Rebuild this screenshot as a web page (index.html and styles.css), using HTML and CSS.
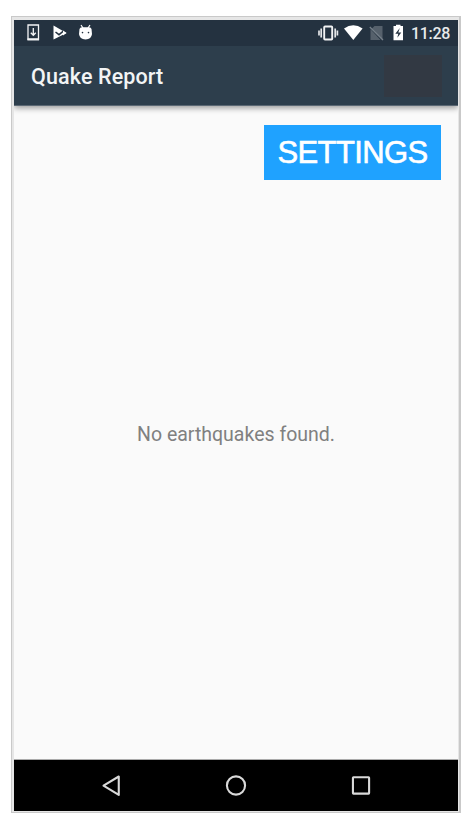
FILE: index.html
```html
<!DOCTYPE html>
<html lang="en">
<head>
<meta charset="utf-8">
<title>Quake Report</title>
<link rel="stylesheet" href="styles.css">
</head>
<body>
<main class="phone">
  <header class="status">
    <svg class="status-left" width="80" height="26" viewBox="0 0 80 26">
      <path d="M14 5h10.500v14.500H14z" fill="none" stroke="#f4f5f6" stroke-width="1.300"/>
      <path d="M13.500 18.300h11.500v2H13.500z" fill="#f4f5f6"/>
      <path d="M19.300 8v7M16.800 12.700l2.500 2.600 2.500-2.600" fill="none" stroke="#f4f5f6" stroke-width="1.300"/>
      <path d="M39.500 5.500L52.500 13 39.500 19.500z" fill="#fff"/>
      <path d="M41.500 12l3.500 2.700 7.500-6.200" fill="none" stroke="#243240" stroke-width="1.500"/>
      <path d="M49 10.500l3.500 2.500-3.500 2.500z" fill="#fff"/>
      <path d="M67 5l2 3M76 5l-2 3" stroke="#fff" stroke-width="1.200"/>
      <path d="M65.500 9Q66 7.500 68 7.300h7Q77 7.500 77.500 9L78 14Q77.500 19 71.500 19.500 65.500 19 65 14z" fill="#fff"/>
      <circle cx="68.500" cy="12.600" r=".8" fill="#243240"/><circle cx="74.500" cy="12.600" r=".8" fill="#243240"/>
    </svg>
    <svg class="status-right" width="92" height="26" viewBox="0 0 92 26">
      <rect x="7.200" y="6.500" width="8" height="13" rx=".8" fill="none" stroke="#f1f2f3" stroke-width="1.900"/>
      <path d="M4.200 8.500v9M2 10.500v5M18.200 8.500v9M20.400 10.500v5" stroke="#e5e7e9" stroke-width="1.700"/>
      <path d="M27 8.600Q36.300 2.100 45.600 8.600L36.300 20z" fill="#fff"/>
      <path d="M57.500 6h8v14.300L55 8.500z" fill="#56616c"/>
      <path d="M53.500 9l10 11h-10z" fill="#56616c"/>
      <path d="M52.800 7L66 20" stroke="#76808a" stroke-width="1.300"/>
      <path d="M76.500 6h2.500V4.800h4.500V6h2.500v14.300h-9.500z" fill="#fff"/>
      <path d="M82.800 8l-4.500 5.700h3l-1 4 4-5.300h-3z" fill="#243240"/>
    </svg>
    <span class="time">11:28</span>
  </header>
  <div class="toolbar"><h1>Quake Report</h1><span class="patch"></span></div>
  <section class="content">
    <div class="settings">SETTINGS</div>
    <p class="empty">No earthquakes found.</p>
  </section>
  <nav class="nav">
    <svg width="445" height="51" viewBox="0 0 445 51" fill="none" stroke="#d9d9d9" stroke-width="2.100">
      <path d="M105 16.500v18.500L89.700 25.700z" stroke-linejoin="round"/>
      <circle cx="222.500" cy="25.500" r="9.100"/>
      <rect x="339.700" y="17.200" width="16.200" height="16.400" rx=".5"/>
    </svg>
  </nav>
</main>
</body>
</html>
```
FILE: styles.css
```css
* { box-sizing: border-box; }
body { margin: 0; background: #fff; font-family: Roboto, sans-serif; }
.phone {
  width: 450px; height: 797px; margin: 16px 0 0 11px;
  display: flex; flex-direction: column;
  border: solid #c9c9c9; border-width: 1px 2px 1px 1px;
  padding: 3px 1px 1px 2px; background: #e6e6e6;
}
.status { height: 26px; display: flex; flex: none; background: #243240; }
.status-left, .status-right { flex: none; }
.status-right { margin-left: 223px; }
.time { margin-left: 2px; color: #e8eaeb; font-size: 16px; font-weight: 500; line-height: 27px; letter-spacing: -.3px; }
.toolbar {
  height: 60px; flex: none; display: flex; align-items: center;
  justify-content: space-between; padding: 0 16px 0 17px; background: #2d3e4c;
  border-bottom: 1px solid #5b6874; box-shadow: 0 2px 6px rgba(0,0,0,.4);
  clip-path: inset(0 0 -12px 0); position: relative;
}
.toolbar h1 { margin: 3px 0 0; font-size: 21.500px; font-weight: 500; line-height: 26px; letter-spacing: .13px; color: #f2f4f5; }
.patch { width: 58px; height: 42px; background: #323943; }
.content { flex: 1; display: flex; flex-direction: column; background: #fafafa; border-bottom: 1px solid #aaa; }
.settings {
  align-self: flex-end; width: 177px; height: 55px; margin: 19px 17px 0 0;
  background: #1fa2ff; color: #fff; font: 31px/56px "Liberation Sans", sans-serif; text-align: center;
  letter-spacing: -.6px; -webkit-text-stroke: .6px #fff;
}
.empty { margin: 241px 0 0; text-align: center; font-size: 19.500px; line-height: 27px; color: #808080; }
.nav { height: 51px; flex: none; background: #000; }
.nav svg { display: block; width: 100%; height: 51px; }
```
